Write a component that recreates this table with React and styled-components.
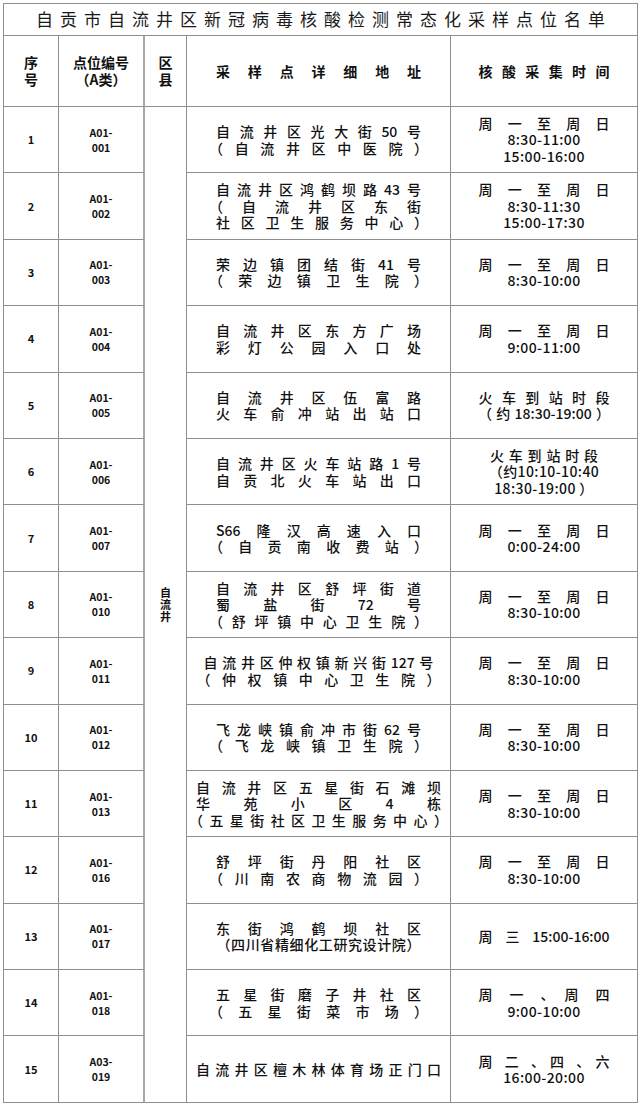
import React from "react";
import styled, { createGlobalStyle } from "styled-components";

const GlobalStyle = createGlobalStyle`
  html, body {
    margin: 0;
    padding: 0;
    background: #fff;
  }
  body {
    font-family: "Noto Sans CJK SC", "Noto Sans", sans-serif;
    color: #111;
  }
`;

const ADDR_W = 205;
const TIME_W = 131;

// s = spread line (distributed like the excel cell), p = plain centered line
const rows = [
  {
    no: "1", code: ["A01-", "001"],
    addr: [{ s: "自流井区光大街50号" }, { s: "（自流井区中医院）" }],
    time: [{ s: "周一至周日" }, { p: "8:30-11:00" }, { p: "15:00-16:00" }],
  },
  {
    no: "2", code: ["A01-", "002"],
    addr: [{ s: "自流井区鸿鹤坝路43号" }, { s: "（自流井区东街" }, { s: "社区卫生服务中心）" }],
    time: [{ s: "周一至周日" }, { p: "8:30-11:30" }, { p: "15:00-17:30" }],
  },
  {
    no: "3", code: ["A01-", "003"],
    addr: [{ s: "荣边镇团结街41号" }, { s: "（荣边镇卫生院）" }],
    time: [{ s: "周一至周日" }, { p: "8:30-10:00" }],
  },
  {
    no: "4", code: ["A01-", "004"],
    addr: [{ s: "自流井区东方广场" }, { s: "彩灯公园入口处" }],
    time: [{ s: "周一至周日" }, { p: "9:00-11:00" }],
  },
  {
    no: "5", code: ["A01-", "005"],
    addr: [{ s: "自流井区伍富路" }, { s: "火车俞冲站出站口" }],
    time: [{ s: "火车到站时段" }, { s: "（约18:30-19:00）", w: 118 }],
  },
  {
    no: "6", code: ["A01-", "006"],
    addr: [{ s: "自流井区火车站路1号" }, { s: "自贡北火车站出口" }],
    time: [{ s: "火车到站时段", w: 108 }, { p: "（约10:10-10:40" }, { p: "18:30-19:00 ）" }],
  },
  {
    no: "7", code: ["A01-", "007"],
    addr: [{ s: "S66隆汉高速入口" }, { s: "（自贡南收费站）" }],
    time: [{ s: "周一至周日" }, { p: "0:00-24:00" }],
  },
  {
    no: "8", code: ["A01-", "010"],
    addr: [{ s: "自流井区舒坪街道" }, { s: "蜀盐街72号" }, { s: "（舒坪镇中心卫生院）" }],
    time: [{ s: "周一至周日" }, { p: "8:30-10:00" }],
  },
  {
    no: "9", code: ["A01-", "011"],
    addr: [{ s: "自流井区仲权镇新兴街127号", w: 230 }, { s: "（仲权镇中心卫生院）", w: 230 }],
    time: [{ s: "周一至周日" }, { p: "8:30-10:00" }],
  },
  {
    no: "10", code: ["A01-", "012"],
    addr: [{ s: "飞龙峡镇俞冲市街62号" }, { s: "（飞龙峡镇卫生院）" }],
    time: [{ s: "周一至周日" }, { p: "8:30-10:00" }],
  },
  {
    no: "11", code: ["A01-", "013"],
    addr: [{ s: "自流井区五星街石滩坝", w: 245 }, { s: "华苑小区4栋", w: 245 }, { s: "（五星街社区卫生服务中心）", w: 245 }],
    time: [{ s: "周一至周日" }, { p: "8:30-10:00" }],
  },
  {
    no: "12", code: ["A01-", "016"],
    addr: [{ s: "舒坪街丹阳社区" }, { s: "（川南农商物流园）" }],
    time: [{ s: "周一至周日" }, { p: "8:30-10:00" }],
  },
  {
    no: "13", code: ["A01-", "017"],
    addr: [{ s: "东街鸿鹤坝社区" }, { s: "（四川省精细化工研究设计院）", w: 190 }],
    time: [{ s: "周三15:00-16:00" }],
  },
  {
    no: "14", code: ["A01-", "018"],
    addr: [{ s: "五星街磨子井社区" }, { s: "（五星街菜市场）" }],
    time: [{ s: "周一、周四" }, { p: "9:00-10:00" }],
  },
  {
    no: "15", code: ["A03-", "019"],
    addr: [{ s: "自流井区檀木林体育场正门口", w: 245 }],
    time: [{ s: "周二、四、六" }, { p: "16:00-20:00" }],
  },
];

const tokenize = (str) => str.match(/[A-Za-z0-9:\-]+|./gu) || [];

const Sheet = styled.div`
  display: grid;
  grid-template-columns: 55px 86px 42px 264px 187px;
  grid-template-rows: 32px 71px repeat(15, 66.4px);
  width: max-content;
  margin: 3px 0 0 3px;
  border-top: 1px solid #8e8e8e;
  border-left: 1px solid #8e8e8e;
`;

const Cell = styled.div`
  box-sizing: border-box;
  display: flex;
  flex-direction: column;
  align-items: center;
  justify-content: center;
  border-bottom: 1px solid #8e8e8e;
  border-right: ${({ $thick }) => ($thick ? "2px solid #a8a8a8" : "1px solid #8e8e8e")};
  font-weight: 500;
  font-size: 14px;
  line-height: 16.5px;
  white-space: nowrap;
`;

const TitleCell = styled(Cell)`
  grid-column: 1 / -1;
  font-size: 17px;
  font-weight: 400;
  letter-spacing: 7px;
  padding-left: 7px;
  color: #1a1a1a;
`;

const HeadCell = styled(Cell)`
  line-height: 17px;
  font-weight: 700;
`;

const SmallCell = styled(Cell)`
  font-size: ${({ $size }) => $size || 10.5}px;
  font-weight: 700;
  line-height: 15px;
`;

const CountyCell = styled(Cell)`
  grid-column: 3;
  grid-row: 3 / span 15;
  font-size: 11px;
  font-weight: 700;
  line-height: 12px;
`;

const Spread = styled.div`
  display: flex;
  justify-content: space-between;
  width: ${({ $w }) => $w}px;
  font-feature-settings: "halt" 1;
`;

const Plain = styled.div`
  text-align: center;
  letter-spacing: 0.4px;
`;

const Lines = ({ items, width }) =>
  items.map((it, i) =>
    it.s ? (
      <Spread key={i} $w={it.w || width}>
        {tokenize(it.s).map((t, j) => (
          <span key={j}>{t}</span>
        ))}
      </Spread>
    ) : (
      <Plain key={i}>{it.p}</Plain>
    )
  );

export default function App() {
  return (
    <>
      <GlobalStyle />
      <Sheet>
        <TitleCell>自贡市自流井区新冠病毒核酸检测常态化采样点位名单</TitleCell>

        <HeadCell>
          <div>序</div>
          <div>号</div>
        </HeadCell>
        <HeadCell $thick>
          <div>点位编号</div>
          <div>（A类）</div>
        </HeadCell>
        <HeadCell>
          <div>区</div>
          <div>县</div>
        </HeadCell>
        <HeadCell>
          <Lines items={[{ s: "采样点详细地址" }]} width={ADDR_W} />
        </HeadCell>
        <HeadCell>
          <Lines items={[{ s: "核酸采集时间" }]} width={TIME_W} />
        </HeadCell>

        <CountyCell>
          <div>自</div>
          <div>流</div>
          <div>井</div>
        </CountyCell>

        {rows.map((r) => (
          <React.Fragment key={r.no}>
            <SmallCell $size={11}>{r.no}</SmallCell>
            <SmallCell $thick>
              {r.code.map((c) => (
                <div key={c}>{c}</div>
              ))}
            </SmallCell>
            <Cell>
              <Lines items={r.addr} width={ADDR_W} />
            </Cell>
            <Cell>
              <Lines items={r.time} width={TIME_W} />
            </Cell>
          </React.Fragment>
        ))}
      </Sheet>
    </>
  );
}
